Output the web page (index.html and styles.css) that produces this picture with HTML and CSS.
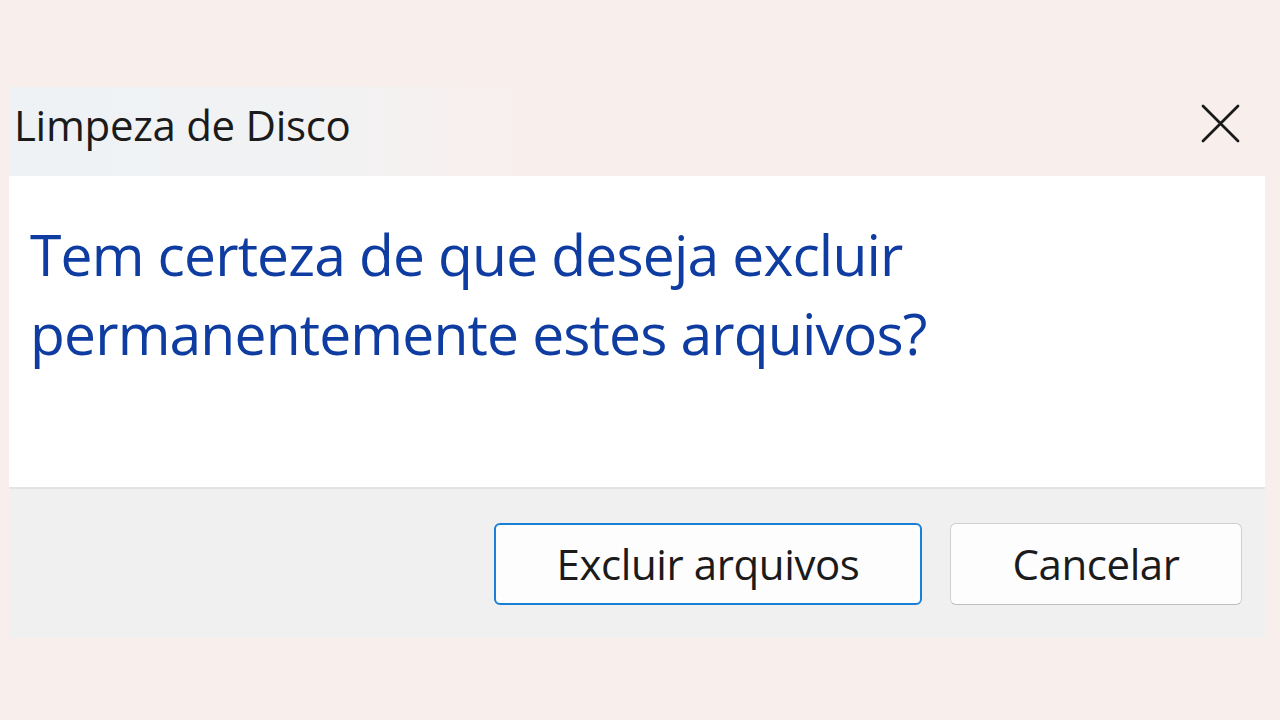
FILE: index.html
```html
<!DOCTYPE html>
<html lang="pt">
<head>
<meta charset="utf-8">
<link rel="stylesheet" href="styles.css">
</head>
<body>
<div class="dialog">
  <div class="titlebar">
    <span class="title">Limpeza de Disco</span>
    <span class="close" aria-label="Fechar">
      <svg width="40" height="40" viewBox="0 0 40 40"><path d="M2 2 L37 37 M37 2 L2 37" stroke="#1a1a1a" stroke-width="2.8" stroke-linecap="round" fill="none"/></svg>
    </span>
  </div>
  <div class="content">
    <p class="instruction">Tem certeza de que deseja excluir permanentemente estes arquivos?</p>
  </div>
  <div class="footer">
    <button class="btn primary">Excluir arquivos</button>
    <button class="btn cancel">Cancelar</button>
  </div>
</div>
</body>
</html>
```
FILE: styles.css
```css
html, body {
  margin: 0;
  padding: 0;
}
body {
  background: #f8efed;
  font-family: "Open Sans", "Noto Sans", sans-serif;
  width: 1280px;
  height: 720px;
  overflow: hidden;
  padding-top: 87px;
  padding-left: 9px;
  box-sizing: border-box;
}
.dialog {
  width: 1256px;
}
.titlebar {
  height: 89px;
  display: flex;
  align-items: flex-start;
  justify-content: space-between;
  background: linear-gradient(90deg, #eef2f5 0px, #f2f2f3 320px, rgba(248, 239, 237, 0) 510px);
  padding: 17px 24px 0 5px;
  box-sizing: border-box;
}
.title {
  font-size: 42px;
  line-height: 42px;
  color: #1b1b1b;
  letter-spacing: -0.3px;
}
.close {
  display: flex;
  width: 40px;
  height: 40px;
}
.content {
  background: #ffffff;
  height: 311px;
  padding: 39px 21px 0 21px;
  box-sizing: border-box;
}
.instruction {
  margin: 0;
  font-size: 57px;
  line-height: 79px;
  color: #0f3ca0;
  letter-spacing: -0.85px;
  width: 960px;
}
.footer {
  background: #f0f0f0;
  border-top: 2px solid #e3e3e3;
  height: 151px;
  box-sizing: border-box;
  display: flex;
  justify-content: flex-end;
  align-items: center;
  gap: 28px;
  padding-right: 23px;
}
.btn {
  height: 82px;
  border-radius: 6px;
  background: #fdfdfd;
  font-family: "Open Sans", "Noto Sans", sans-serif;
  font-size: 42px;
  color: #1b1b1b;
  letter-spacing: -0.4px;
  padding: 0;
}
.primary {
  width: 428px;
  border: 2px solid #1a7fd6;
}
.cancel {
  width: 292px;
  border: 1px solid #d0d0d0;
  border-bottom-color: #bdbdbd;
}
```
